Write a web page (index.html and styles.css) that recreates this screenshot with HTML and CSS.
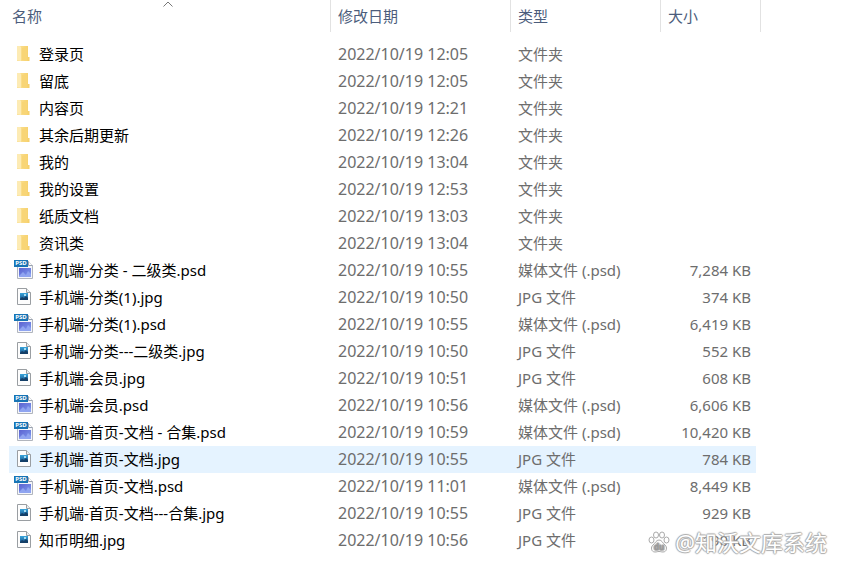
FILE: index.html
```html
<!DOCTYPE html>
<html lang="zh-CN">
<head>
  <meta charset="UTF-8" />
  <meta name="viewport" content="width=device-width, initial-scale=1.0"/>
  <title>文件列表</title>
  <link rel="stylesheet" href="styles.css">
</head>
<body>

  <!-- Shared icons -->
  <svg class="sprite" aria-hidden="true">
    <defs>
      <linearGradient id="gold" x1="0" x2="1">
        <stop offset="0" stop-color="#fbe39a"/>
        <stop offset="1" stop-color="#f6cf68"/>
      </linearGradient>
      <linearGradient id="blue" x1="0" y1="0" x2="0" y2="1">
        <stop offset="0" stop-color="#38a5dc"/>
        <stop offset="1" stop-color="#174f86"/>
      </linearGradient>
      <linearGradient id="violet" x1="0" y1="0" x2="1" y2="1">
        <stop offset="0" stop-color="#5b62d0"/>
        <stop offset="1" stop-color="#7f9cf0"/>
      </linearGradient>
    </defs>
    <symbol id="folder" viewBox="0 0 20 20">
      <path d="M3 2h11v11h1.500v4H3z" fill="url(#gold)"/>
      <path d="M3 2h3l1 1v14l-4-1z" fill="#fdebb4"/>
      <path d="M8 4v12l5 1V3z" fill="#f8d576"/>
    </symbol>
    <symbol id="jpg" viewBox="0 0 20 20">
      <path d="M3.500 1.500h9l4 4v12h-13z" fill="#fdfdfd" stroke="#9a9ea2"/>
      <path d="M12.500 1.500v4h4" fill="#e9edf0" stroke="#9a9ea2"/>
      <path d="M6 6h8v7H6z" fill="url(#blue)"/>
      <path d="M6 12l2-2 2 1 2-2 2 2v2H6z" fill="#143f68"/>
      <path d="M10 7h2v2h-2z" fill="#a6dcf2"/>
    </symbol>
    <symbol id="psd" viewBox="0 0 20 20">
      <path d="M3.500 1.500h11l4 4v13h-15z" fill="#f4f6fb" stroke="#b1b5bd"/>
      <path d="M14.500 1.500v4h4" fill="#fff" stroke="#9aa2ae"/>
      <path d="M5 8h12v9H5z" fill="url(#violet)"/>
      <path d="M5 16l4-4 3 3 2-4 3 3v3H5z" fill="#8fa4f0"/>
    </symbol>
  </svg>

  <main>
    <table class="files">
      <colgroup>
        <col class="col-name">
        <col class="col-date">
        <col class="col-type">
        <col class="col-size">
      </colgroup>
      <thead>
        <tr>
          <th aria-sort="ascending">
            <button type="button">名称</button>
            <svg class="sort" viewBox="0 0 12 6" aria-hidden="true"><path d="M1.500 5.500L6 1l4.500 4.500" fill="none" stroke="#777"/></svg>
          </th>
          <th><button type="button">修改日期</button></th>
          <th><button type="button">类型</button></th>
          <th><button type="button">大小</button></th>
        </tr>
      </thead>
      <tbody>
        <tr><td><div class="name"><svg><use href="#folder"/></svg>登录页</div></td><td class="date">2022/10/19 12:05</td><td>文件夹</td><td></td></tr>
        <tr><td><div class="name"><svg><use href="#folder"/></svg>留底</div></td><td class="date">2022/10/19 12:05</td><td>文件夹</td><td></td></tr>
        <tr><td><div class="name"><svg><use href="#folder"/></svg>内容页</div></td><td class="date">2022/10/19 12:21</td><td>文件夹</td><td></td></tr>
        <tr><td><div class="name"><svg><use href="#folder"/></svg>其余后期更新</div></td><td class="date">2022/10/19 12:26</td><td>文件夹</td><td></td></tr>
        <tr><td><div class="name"><svg><use href="#folder"/></svg>我的</div></td><td class="date">2022/10/19 13:04</td><td>文件夹</td><td></td></tr>
        <tr><td><div class="name"><svg><use href="#folder"/></svg>我的设置</div></td><td class="date">2022/10/19 12:53</td><td>文件夹</td><td></td></tr>
        <tr><td><div class="name"><svg><use href="#folder"/></svg>纸质文档</div></td><td class="date">2022/10/19 13:03</td><td>文件夹</td><td></td></tr>
        <tr><td><div class="name"><svg><use href="#folder"/></svg>资讯类</div></td><td class="date">2022/10/19 13:04</td><td>文件夹</td><td></td></tr>
        <tr><td><div class="name"><svg><use href="#psd"/></svg><span class="badge">PSD</span>手机端-分类 - 二级类.psd</div></td><td class="date">2022/10/19 10:55</td><td>媒体文件 (.psd)</td><td>7,284 KB</td></tr>
        <tr><td><div class="name"><svg><use href="#jpg"/></svg>手机端-分类(1).jpg</div></td><td class="date">2022/10/19 10:50</td><td>JPG 文件</td><td>374 KB</td></tr>
        <tr><td><div class="name"><svg><use href="#psd"/></svg><span class="badge">PSD</span>手机端-分类(1).psd</div></td><td class="date">2022/10/19 10:55</td><td>媒体文件 (.psd)</td><td>6,419 KB</td></tr>
        <tr><td><div class="name"><svg><use href="#jpg"/></svg>手机端-分类---二级类.jpg</div></td><td class="date">2022/10/19 10:50</td><td>JPG 文件</td><td>552 KB</td></tr>
        <tr><td><div class="name"><svg><use href="#jpg"/></svg>手机端-会员.jpg</div></td><td class="date">2022/10/19 10:51</td><td>JPG 文件</td><td>608 KB</td></tr>
        <tr><td><div class="name"><svg><use href="#psd"/></svg><span class="badge">PSD</span>手机端-会员.psd</div></td><td class="date">2022/10/19 10:56</td><td>媒体文件 (.psd)</td><td>6,606 KB</td></tr>
        <tr><td><div class="name"><svg><use href="#psd"/></svg><span class="badge">PSD</span>手机端-首页-文档 - 合集.psd</div></td><td class="date">2022/10/19 10:59</td><td>媒体文件 (.psd)</td><td>10,420 KB</td></tr>
        <tr class="active"><td><div class="name"><svg><use href="#jpg"/></svg>手机端-首页-文档.jpg</div></td><td class="date">2022/10/19 10:55</td><td>JPG 文件</td><td>784 KB</td></tr>
        <tr><td><div class="name"><svg><use href="#psd"/></svg><span class="badge">PSD</span>手机端-首页-文档.psd</div></td><td class="date">2022/10/19 11:01</td><td>媒体文件 (.psd)</td><td>8,449 KB</td></tr>
        <tr><td><div class="name"><svg><use href="#jpg"/></svg>手机端-首页-文档---合集.jpg</div></td><td class="date">2022/10/19 10:55</td><td>JPG 文件</td><td>929 KB</td></tr>
        <tr><td><div class="name"><svg><use href="#jpg"/></svg>知币明细.jpg</div></td><td class="date">2022/10/19 10:56</td><td>JPG 文件</td><td>190 KB</td></tr>
      </tbody>
    </table>
  </main>

  <!-- Watermark over the list -->
  <div class="watermark">
    <svg viewBox="0 0 22 22" aria-hidden="true">
      <g fill="#fff" stroke="#aaa">
        <ellipse cx="3.500" cy="9" rx="2.500" ry="3"/>
        <ellipse cx="8" cy="4" rx="2.500" ry="3"/>
        <ellipse cx="14" cy="4" rx="2.500" ry="3"/>
        <ellipse cx="18.500" cy="9" rx="2.500" ry="3"/>
        <path d="M11 9c-3 0-3.500 3-6 5s-2 7 2 7c2 0 2-.5 4-.5s2 .5 4 .5c4 0 4.500-5 2-7s-3-5-6-5z"/>
      </g>
      <text x="6" y="19" font-size="8" font-weight="700" fill="#999">du</text>
    </svg>
    <span>@知沃文库系统</span>
  </div>

</body>
</html>
```

FILE: styles.css
```css
body {
  margin: 0;
  background: #fff;
  color: #6d6d6d;
  font-family: "Noto Sans", "Noto Sans CJK SC", sans-serif;
  font-size: 15px;
  line-height: 27px;
}

main {
  padding: 0 82px 0 9px;
}

.sprite {
  position: absolute;
  width: 0;
  height: 0;
}

.files {
  width: 100%;
  table-layout: fixed;
  border-collapse: separate;
  border-spacing: 0;
}

.col-date {
  width: 180px;
}

.col-type {
  width: 150px;
}

.col-size {
  width: 100px;
}

th {
  position: relative;
  height: 32px;
  padding: 0 0 0 7px;
  border-right: 1px solid #e2e2e2;
  text-align: left;
}

th:first-child {
  padding-left: 3px;
}

th button {
  display: block;
  width: 100%;
  padding: 0;
  border: none;
  background: none;
  color: #4c5d7c;
  font: inherit;
  font-weight: 400;
  line-height: 32px;
  text-align: left;
}

.sort {
  position: absolute;
  top: 1px;
  left: 0;
  right: 4px;
  width: 12px;
  height: 6px;
  margin: 0 auto;
}

tbody::before {
  content: "";
  display: block;
  height: 9px;
}

td {
  height: 27px;
  padding: 0 0 0 7px;
  white-space: nowrap;
}

td:first-child {
  padding-left: 5px;
  color: #000;
}

td:last-child {
  padding-right: 5px;
  border-right: 5px solid transparent;
  background-clip: padding-box;
  text-align: right;
}

.date {
  font-size: 16px;
}

.name {
  position: relative;
  display: flex;
  align-items: center;
  gap: 5px;
}

.name svg {
  width: 20px;
  height: 20px;
  margin-bottom: 2px;
}

/* file type label on the corner of the icon */
.badge {
  position: absolute;
  top: 3px;
  left: 0;
  width: 14px;
  background: #1874b5;
  color: #fff;
  font-size: 6px;
  font-weight: 700;
  line-height: 7px;
  text-align: center;
}

.active td {
  background-color: #e5f3ff;
}

.watermark {
  position: absolute;
  right: 16px;
  bottom: 15px;
  display: flex;
  align-items: center;
  gap: 5px;
  color: #fff;
  font-size: 22px;
  line-height: 32px;
  text-shadow: 1px 0 1px #aaa, -1px 0 1px #aaa, 0 1px 1px #aaa, 0 -1px 1px #aaa;
}

.watermark svg {
  width: 22px;
  height: 22px;
}
```
